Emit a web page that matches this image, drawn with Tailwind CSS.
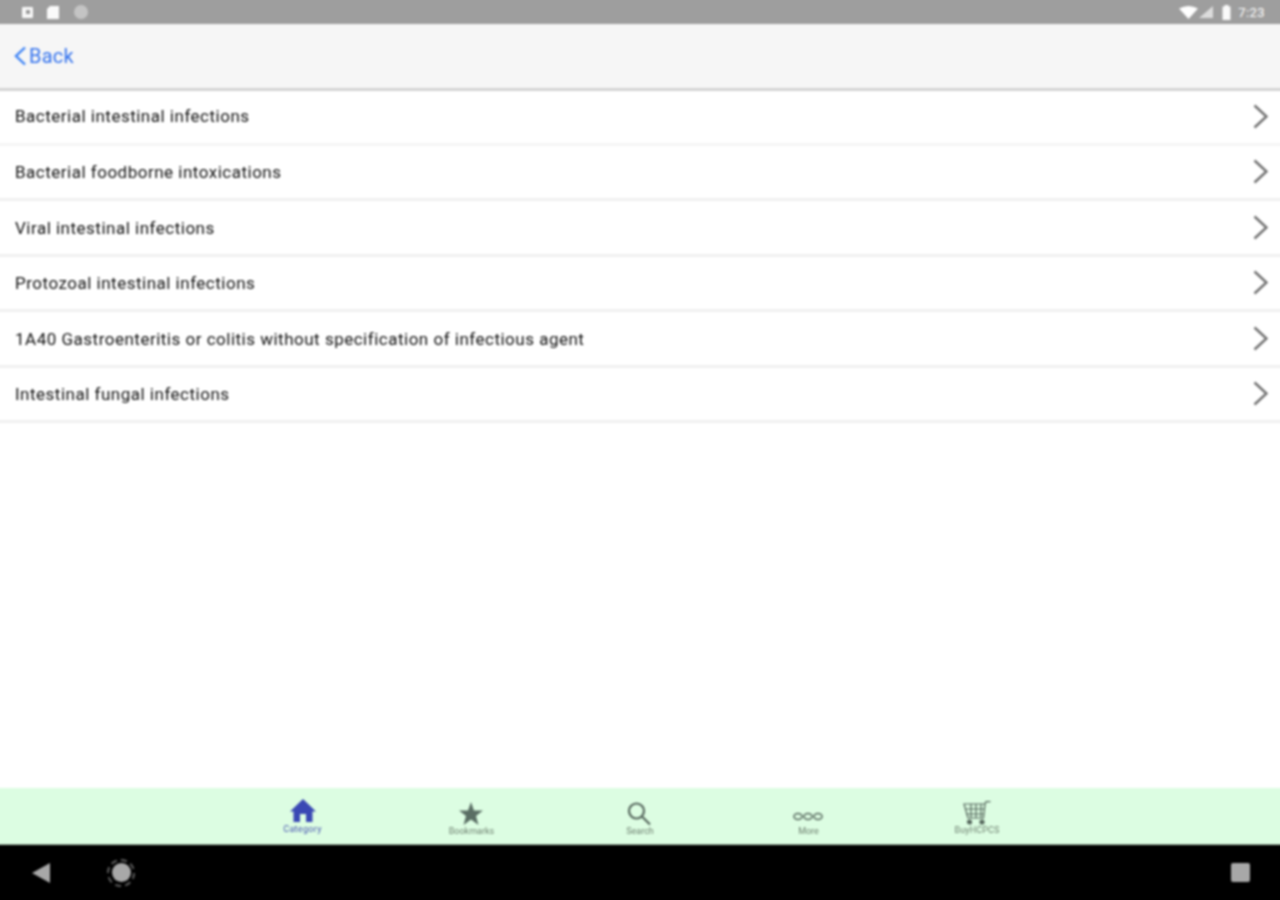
<!DOCTYPE html>
<html><head><meta charset="utf-8"><script src="https://cdn.jsdelivr.net/npm/@tailwindcss/browser@4"></script></head>
<body class="m-0 bg-white">
<div class="w-[1280px] h-[900px] overflow-hidden">
<div class="w-[1288px] h-[908px] -m-[4px] flex flex-col font-['Roboto',sans-serif] [filter:blur(0.8px)]">
  <div class="h-[28px] pt-[4px] bg-[#9e9e9e] flex items-center justify-between pl-[26px] pr-[19px] shrink-0">
    <div class="flex items-center gap-[14px]">
      <div class="w-[11px] h-[11px] bg-[#f8f8f8] rounded-[1px] flex items-center justify-center"><div class="w-[4px] h-[4px] bg-[#999]"></div></div>
      <svg width="12" height="13" viewBox="0 0 12 13"><path d="M3 0H12V13H0V3Z" fill="#fafafa"/></svg>
      <div class="w-[14px] h-[14px] rounded-full bg-[#c4c4c4] ml-[1px]"></div>
    </div>
    <div class="flex items-center">
      <svg width="19" height="13" viewBox="0 0 19 13"><path d="M0 2.500Q9.500-2.500 19 2.500L9.500 13Z" fill="#fff"/></svg>
      <svg width="14" height="12" viewBox="0 0 14 12" class="ml-[1px]"><path d="M14 0V12H0Z" fill="#dcdcdc"/></svg>
      <svg width="9" height="15" viewBox="0 0 9 15" class="ml-[9px]"><path d="M2.500 0H6.500V1.500H8.500V15H.5V1.500H2.500Z" fill="#fafafa"/></svg>
      <span class="ml-[7px] text-[13px] tracking-[0.4px] leading-none text-[#fff]">7:23</span>
    </div>
  </div>
  <div class="h-[67px] bg-[#f6f6f6] border-b-[3px] border-[#d4d4d4] flex items-center pl-[18px] shrink-0">
    <svg width="12" height="20" viewBox="0 0 12 20" fill="none" stroke="#3b82f6" stroke-width="2.400"><path d="M11 1.500 2 10l9 8.500"/></svg>
    <span class="ml-[3px] text-[20px] tracking-[0.2px] leading-none text-[#3473ee]">Back</span>
  </div>
  <div class="flex-1">
    <div class="h-[54.5px] border-b-[3px] border-[#f5f5f5] flex items-center justify-between pl-[19px] pr-[16px] text-[#111] text-[17px] tracking-[0.5px]"><span>Bacterial intestinal infections</span>
      <svg width="15" height="25" viewBox="0 0 15 25" fill="none" stroke="#707070" stroke-width="2.400"><path d="M1.500 1.500 13.500 12.500 1.500 23.500"/></svg></div>
    <div class="h-[55.5px] border-b-[3px] border-[#f0f0f0] flex items-center justify-between pl-[19px] pr-[16px] text-[#111] text-[17px] tracking-[0.5px]"><span class="relative top-[1px]">Bacterial foodborne intoxications</span>
      <svg width="15" height="25" viewBox="0 0 15 25" fill="none" stroke="#707070" stroke-width="2.400"><path d="M1.500 1.500 13.500 12.500 1.500 23.500"/></svg></div>
    <div class="h-[55.5px] border-b-[3px] border-[#f0f0f0] flex items-center justify-between pl-[19px] pr-[16px] text-[#111] text-[17px] tracking-[0.5px]"><span class="relative top-[1px]">Viral intestinal infections</span>
      <svg width="15" height="25" viewBox="0 0 15 25" fill="none" stroke="#707070" stroke-width="2.400"><path d="M1.500 1.500 13.500 12.500 1.500 23.500"/></svg></div>
    <div class="h-[55.5px] border-b-[3px] border-[#f0f0f0] flex items-center justify-between pl-[19px] pr-[16px] text-[#111] text-[17px] tracking-[0.5px]"><span class="relative top-[1px]">Protozoal intestinal infections</span>
      <svg width="15" height="25" viewBox="0 0 15 25" fill="none" stroke="#707070" stroke-width="2.400"><path d="M1.500 1.500 13.500 12.500 1.500 23.500"/></svg></div>
    <div class="h-[55.5px] border-b-[3px] border-[#f0f0f0] flex items-center justify-between pl-[19px] pr-[16px] text-[#111] text-[17px] tracking-[0.5px]"><span class="relative top-[1px]">1A40 Gastroenteritis or colitis without specification of infectious agent</span>
      <svg width="15" height="25" viewBox="0 0 15 25" fill="none" stroke="#707070" stroke-width="2.400"><path d="M1.500 1.500 13.500 12.500 1.500 23.500"/></svg></div>
    <div class="h-[55.5px] border-b-[3px] border-[#f0f0f0] flex items-center justify-between pl-[19px] pr-[16px] text-[#111] text-[17px] tracking-[0.5px]"><span class="relative top-[1px]">Intestinal fungal infections</span>
      <svg width="15" height="25" viewBox="0 0 15 25" fill="none" stroke="#707070" stroke-width="2.400"><path d="M1.500 1.500 13.500 12.500 1.500 23.500"/></svg></div>
  </div>
  <div class="h-[57px] bg-[#dcfde2] flex justify-center shrink-0 border-b border-[#9db3a2]">
    <div class="w-[168.5px] flex flex-col items-center pt-[11px] text-[#4a56b0]">
      <svg width="26" height="24" viewBox="0 0 26 24" class="mr-[1px]"><path d="M13 0 26 12.500H22.500V23H16V15H10V23H3.500V12.500H0Z" fill="#3a48b4"/></svg>
      <span class="text-[9px] tracking-[0.3px] leading-[9px] mt-[2px] mr-[1px]">Category</span>
    </div>
    <div class="w-[168.5px] flex flex-col items-center pt-[14px] text-[#708272]">
      <svg width="24" height="23" viewBox="0 0 24 23" class="mr-[2px]"><path d="M12 0 15 8.500H24L17 14 19.500 23 12 17.500 4.500 23 7 14 0 8.500H9Z" fill="#5a6e64"/></svg>
      <span class="text-[9px] leading-[9px] mt-[2px]">Bookmarks</span>
    </div>
    <div class="w-[168.5px] flex flex-col items-center pt-[14px] text-[#708272]">
      <svg width="24" height="23" viewBox="0 0 24 23" fill="none" stroke="#55665c" stroke-width="2.200" class="mr-[2px]"><circle cx="9.500" cy="9" r="7.500"/><path d="M15 14.500 23 22.500"/></svg>
      <span class="text-[9px] leading-[9px] mt-[2px]">Search</span>
    </div>
    <div class="w-[168.5px] flex flex-col items-center pt-[24px] text-[#708272]">
      <svg width="30" height="9" viewBox="0 0 30 9" fill="none" stroke="#55665c" stroke-width="1.500" class="mr-[2px]"><ellipse cx="5" cy="4.500" rx="4" ry="3"/><ellipse cx="15" cy="4.500" rx="4" ry="3"/><ellipse cx="25" cy="4.500" rx="4" ry="3"/></svg>
      <span class="text-[9px] leading-[9px] mt-[6px]">More</span>
    </div>
    <div class="w-[168.5px] flex flex-col items-center pt-[13px] text-[#708272]">
      <svg width="28" height="24" viewBox="0 0 28 24" fill="none" stroke="#55665c" stroke-width="1.200"><path d="M1 3H22L20.500 17H5Z"/><path d="M22 3 23 0.700H27.500M2 8H21.500M3 13H21M8 3V17M13 3V17M18 3V17"/><circle cx="6.500" cy="21" r="2" fill="#55665c"/><circle cx="19" cy="21" r="2" fill="#55665c"/></svg>
      <span class="text-[9px] tracking-[0.1px] leading-[9px] mt-[1px]">BuyHCPCS</span>
    </div>
  </div>
  <div class="h-[59px] pb-[4px] bg-black flex items-center shrink-0 pl-[36px] pr-[34px]">
    <svg width="18" height="20" viewBox="0 0 18 20"><path d="M18 0V20L0 10Z" fill="#a8a8a8"/></svg>
    <div class="ml-[57px] w-[28px] h-[28px] rounded-full border-[2px] border-dashed border-[#5c5c5c] flex items-center justify-center"><div class="w-[19px] h-[19px] rounded-full bg-[#a8a8a8]"></div></div>
    <div class="ml-auto w-[19px] h-[19px] rounded-[2px] bg-[#a8a8a8]"></div>
  </div>
</div>
</div>
</body></html>
